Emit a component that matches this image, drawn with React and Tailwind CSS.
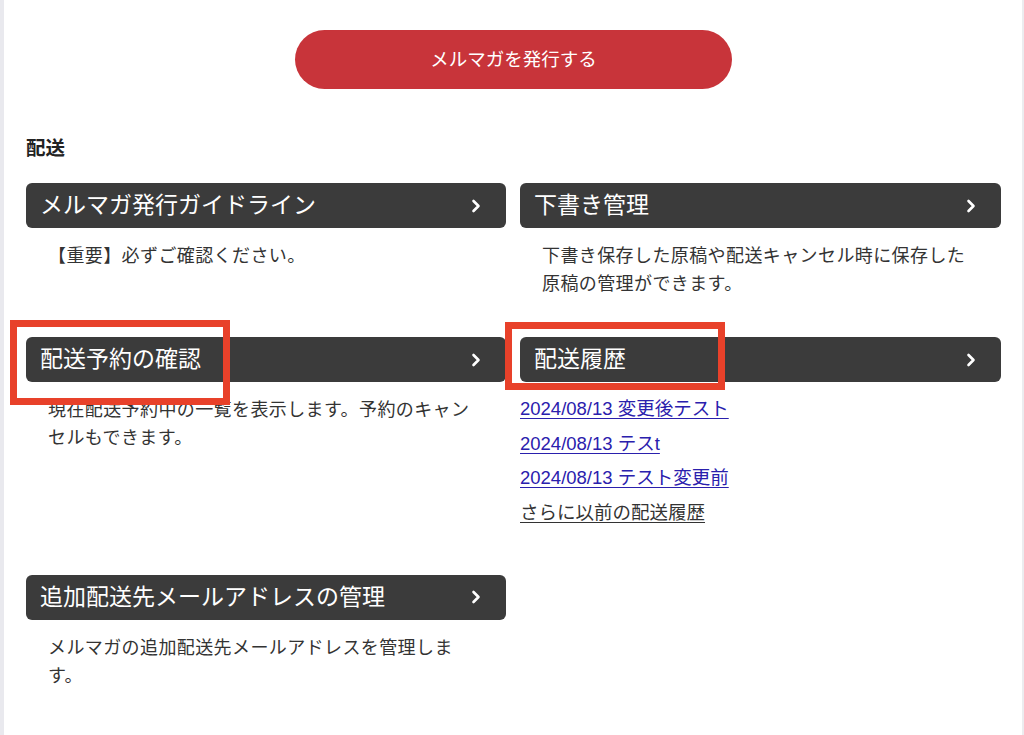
import React from "react";

const FONT = { fontFamily: '"Liberation Sans", "Noto Sans CJK JP", sans-serif' };

function Chevron() {
  return (
    <svg width="10" height="14" viewBox="0 0 10 14" fill="none" className="shrink-0">
      <path d="M2.5 2 L7.5 7 L2.5 12" stroke="#ffffff" strokeWidth="2.6" strokeLinecap="round" strokeLinejoin="round" />
    </svg>
  );
}

function Bar({ title }) {
  return (
    <div className="flex h-[45px] items-center justify-between rounded-[6px] bg-[#3b3b3b] pl-[14px] pr-[25px]">
      <span className="text-[23px] leading-none text-white">{title}</span>
      <Chevron />
    </div>
  );
}

function Card({ title, children }) {
  return (
    <div className="flex flex-col">
      <Bar title={title} />
      {children}
    </div>
  );
}

function Desc({ children }) {
  return (
    <p className="mt-[14px] pl-[22px] pr-[24px] text-[18px] leading-[28px] tracking-[0.4px] text-[#333333]">
      {children}
    </p>
  );
}

export default function App() {
  return (
    <div className="relative flex min-h-[735px] w-[1024px] bg-white" style={FONT}>
      <div className="w-[4px] shrink-0 bg-[#e9e9ee]" />
      <main className="flex-1 pl-[22px] pr-[21px] pt-[30px]">
        <div className="flex justify-center">
          <button className="h-[59px] w-[437px] rounded-full bg-[#c8343a] text-[18.5px] text-white">
            メルマガを発行する
          </button>
        </div>
        <h2 className="mt-[45px] text-[19.5px] font-bold leading-[28px] text-[#222222]">配送</h2>
        <div className="mt-[21px] grid grid-cols-[480px_481px] gap-x-[14px] gap-y-[39px]">
          <Card title="メルマガ発行ガイドライン">
            <Desc>【重要】必ずご確認ください。</Desc>
          </Card>
          <Card title="下書き管理">
            <Desc>下書き保存した原稿や配送キャンセル時に保存した原稿の管理ができます。</Desc>
          </Card>
          <Card title="配送予約の確認">
            <Desc>現在配送予約中の一覧を表示します。予約のキャンセルもできます。</Desc>
          </Card>
          <Card title="配送履歴">
            <div className="mt-[13px] flex flex-col items-start gap-[6.5px] pb-[9px] text-[18.5px] leading-[28px]">
              <a href="#" className="text-[#2a20ad] underline underline-offset-[3px]">2024/08/13 変更後テスト</a>
              <a href="#" className="text-[#2a20ad] underline underline-offset-[3px]">2024/08/13 テスt</a>
              <a href="#" className="text-[#2a20ad] underline underline-offset-[3px]">2024/08/13 テスト変更前</a>
              <a href="#" className="text-[#333333] underline underline-offset-[3px]">さらに以前の配送履歴</a>
            </div>
          </Card>
          <Card title="追加配送先メールアドレスの管理">
            <Desc>メルマガの追加配送先メールアドレスを管理します。</Desc>
          </Card>
        </div>
      </main>
      <div className="w-[2px] shrink-0 bg-[#ececef]" />

      <div className="pointer-events-none absolute left-[10px] top-[320px] h-[85px] w-[220px] border-[7px] border-[#e8412a]" />
      <div className="pointer-events-none absolute left-[505px] top-[322px] h-[68px] w-[220px] border-[7px] border-[#e8412a]" />
    </div>
  );
}
